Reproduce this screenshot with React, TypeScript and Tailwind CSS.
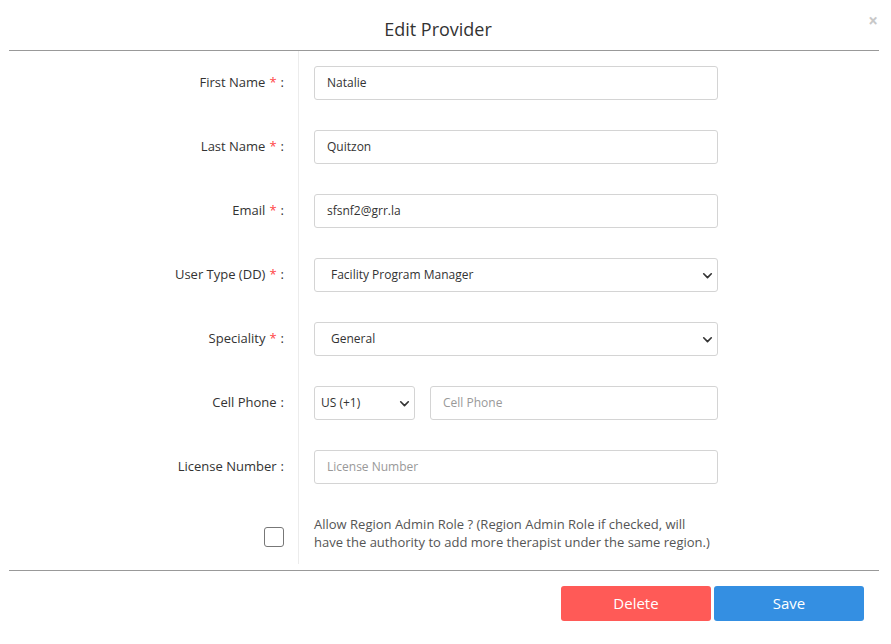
import { useState } from "react";

const font = { fontFamily: '"Open Sans", "Noto Sans", Arial, sans-serif' };

function Chevron() {
  return (
    <svg width="11" height="11" viewBox="0 0 16 16" fill="none" aria-hidden>
      <path d="M2.5 5.5 8 11l5.5-5.5" stroke="#333" strokeWidth="2.4" strokeLinecap="round" strokeLinejoin="round" />
    </svg>
  );
}

function Label({ text, required }: { text: string; required?: boolean }) {
  return (
    <div className="flex h-[34px] items-center justify-end text-[13px] text-[#333]">
      {text}
      {required ? <span className="ml-[4px] text-[#f44]">*</span> : null}
      <span className="ml-[4px]">:</span>
    </div>
  );
}

function TextBox({ value, placeholder, width = "w-[404px]" }: { value?: string; placeholder?: string; width?: string }) {
  return (
    <div className={`flex h-[34px] ${width} items-center rounded-[3px] border border-[#d4d4d4] bg-white pl-[12px] text-[12px]`}>
      {value ? <span className="text-[#333]">{value}</span> : <span className="text-[#999]">{placeholder}</span>}
    </div>
  );
}

function SelectBox({ value, width = "w-[404px]", pl = "pl-[16px]" }: { value: string; width?: string; pl?: string }) {
  return (
    <div className={`flex h-[34px] ${width} items-center justify-between rounded-[3px] border border-[#d4d4d4] bg-white ${pl} pr-[4px] text-[12px] text-[#333]`}>
      <span>{value}</span>
      <Chevron />
    </div>
  );
}

export default function App() {
  const [checked, setChecked] = useState(false);
  return (
    <div className="h-[644px] w-[891px] bg-white" style={font}>
      <div className="relative ml-[9px] mr-[12px] flex h-[51px] justify-center border-b border-[#999] pr-[12px] pt-[17px]">
        <h2 className="text-[18px] leading-[24px] text-[#333]">Edit Provider</h2>
        <span className="absolute right-[1px] top-[12px] text-[17px] font-bold leading-none text-[#c8c8c8]">×</span>
      </div>

      <div className="ml-[9px] mr-[12px] border-b border-[#999] pb-[6px]">
        <div className="flex">
          <div className="flex w-[290px] shrink-0 flex-col gap-[30px] border-r border-[#ececec] pb-[14px] pr-[14px] pt-[15px]">
            <Label text="First Name" required />
            <Label text="Last Name" required />
            <Label text="Email" required />
            <Label text="User Type (DD)" required />
            <Label text="Speciality" required />
            <Label text="Cell Phone" />
            <Label text="License Number" />
            <div className="flex h-[36px] items-start justify-end pt-[13px]">
              <button
                type="button"
                onClick={() => setChecked((c) => !c)}
                className="flex h-[20px] w-[20px] items-center justify-center rounded-[3px] border border-[#777] bg-white"
                aria-label="Allow Region Admin Role"
              >
                {checked ? <span className="text-[12px] leading-none">✓</span> : null}
              </button>
            </div>
          </div>
          <div className="flex flex-col gap-[30px] pl-[15px] pt-[15px]">
            <TextBox value="Natalie" />
            <TextBox value="Quitzon" />
            <TextBox value="sfsnf2@grr.la" />
            <SelectBox value="Facility Program Manager" />
            <SelectBox value="General" />
            <div className="flex gap-[15px]">
              <SelectBox value="US (+1)" width="w-[101px]" pl="pl-[6px]" />
              <TextBox placeholder="Cell Phone" width="w-[288px]" />
            </div>
            <TextBox placeholder="License Number" />
            <p className="h-[36px] pt-[1px] text-[13px] leading-[18px] text-[#555]">
              Allow Region Admin Role ? (Region Admin Role if checked, will
              <br />
              have the authority to add more therapist under the same region.)
            </p>
          </div>
        </div>
      </div>

      <div className="flex justify-end gap-[3px] pr-[27px] pt-[15px]">
        <button type="button" className="h-[35px] w-[150px] rounded-[3px] bg-[#ff5a57] text-[15px] text-white">
          Delete
        </button>
        <button type="button" className="h-[35px] w-[150px] rounded-[3px] bg-[#348fe2] text-[15px] text-white">
          Save
        </button>
      </div>
    </div>
  );
}
